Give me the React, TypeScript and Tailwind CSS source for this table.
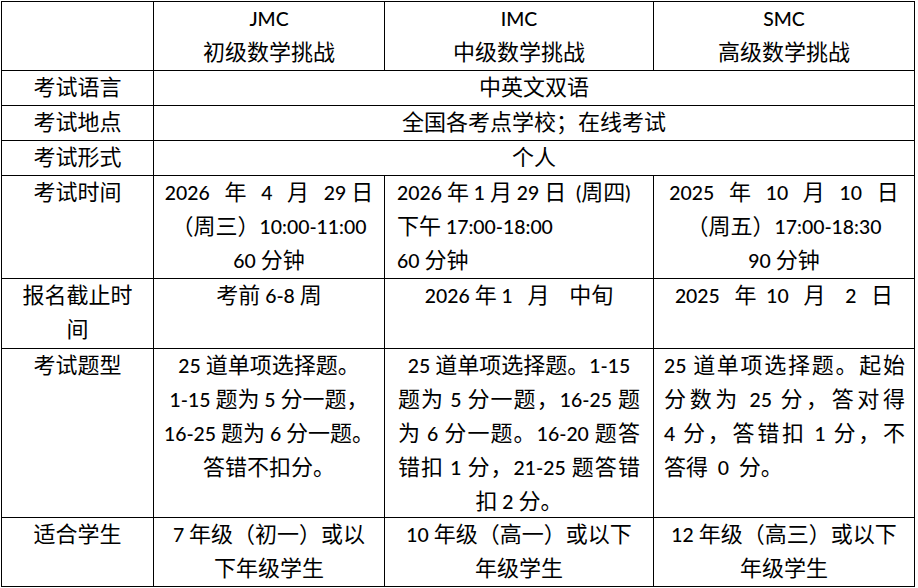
import React from 'react';

function T({ s }: { s: string }) {
  const parts = s.split(/([\x20-\x7E]+)/).filter((p) => p.length > 0);
  return (
    <>
      {parts.map((p, i) =>
        /^[\x20-\x7E]+$/.test(p) ? (
          <span key={i} className="text-[19.4px] leading-none font-medium">
            {p}
          </span>
        ) : (
          <span key={i}>{p}</span>
        )
      )}
    </>
  );
}

function L({ t, a = 'c', pre = false }: { t: string; a?: 'c' | 'l' | 'j'; pre?: boolean }) {
  const al =
    a === 'c'
      ? 'text-center whitespace-nowrap'
      : a === 'l'
      ? 'text-left whitespace-nowrap'
      : 'text-justify [text-align-last:justify]';
  return (
    <div className={`${al} ${pre ? 'whitespace-pre' : ''}`}>
      <T s={t} />
    </div>
  );
}

function C({ children, className = '' }: { children?: React.ReactNode; className?: string }) {
  return (
    <div className={`border-r border-b border-black ${className}`}>
      <div className="-mt-px">{children}</div>
    </div>
  );
}

export default function App() {
  return (
    <div className="min-h-screen bg-white pt-[1px] pl-[1px]">
      <div className="grid w-[914px] grid-cols-[152px_231px_269px_261px] grid-rows-[69px_35px_35px_35px_103px_70px_169px_69px] border-l border-t border-black bg-white text-[22px] leading-[34px] text-black font-['Lato','Noto_Sans_CJK_SC',sans-serif]">
        {/* header */}
        <C />
        <C>
          <L t="JMC" />
          <L t="初级数学挑战" />
        </C>
        <C>
          <L t="IMC" />
          <L t="中级数学挑战" />
        </C>
        <C>
          <L t="SMC" />
          <L t="高级数学挑战" />
        </C>

        {/* 考试语言 */}
        <C>
          <L t="考试语言" />
        </C>
        <C className="col-span-3">
          <L t="中英文双语" />
        </C>

        {/* 考试地点 */}
        <C>
          <L t="考试地点" />
        </C>
        <C className="col-span-3">
          <L t="全国各考点学校；在线考试" />
        </C>

        {/* 考试形式 */}
        <C>
          <L t="考试形式" />
        </C>
        <C className="col-span-3">
          <L t="个人" />
        </C>

        {/* 考试时间 */}
        <C>
          <L t="考试时间" />
        </C>
        <C>
          <L t="2026   年   4   月   29 日" pre />
          <L t="（周三）10:00-11:00" />
          <L t="60 分钟" />
        </C>
        <C className="pl-[12px]">
          <L t="2026 年 1 月 29 日  (周四)" a="l" pre />
          <L t="下午 17:00-18:00" a="l" />
          <L t="60 分钟" a="l" />
        </C>
        <C>
          <L t="2025   年   10   月   10   日" pre />
          <L t="（周五）17:00-18:30" />
          <L t="90 分钟" />
        </C>

        {/* 报名截止时间 */}
        <C>
          <L t="报名截止时" />
          <L t="间" />
        </C>
        <C>
          <L t="考前 6-8 周" />
        </C>
        <C>
          <L t="2026 年 1   月    中旬" pre />
        </C>
        <C>
          <L t="2025   年  10   月    2   日" pre />
        </C>

        {/* 考试题型 */}
        <C>
          <L t="考试题型" />
        </C>
        <C>
          <L t="25 道单项选择题。" />
          <L t="1-15 题为 5 分一题，" />
          <L t="16-25 题为 6 分一题。" />
          <L t="答错不扣分。" />
        </C>
        <C className="px-[13px]">
          <L t="25 道单项选择题。1-15" />
          <L t="题为 5 分一题，16-25 题" a="j" />
          <L t="为 6 分一题。16-20 题答" a="j" />
          <L t="错扣 1 分，21-25 题答错" a="j" />
          <L t="扣 2 分。" />
        </C>
        <C className="pl-[10px] pr-[9px]">
          <L t="25 道单项选择题。起始" a="j" />
          <L t="分数为 25 分，答对得" a="j" />
          <L t="4 分，答错扣 1 分，不" a="j" />
          <L t="答得  0  分。" a="l" pre />
        </C>

        {/* 适合学生 */}
        <C>
          <L t="适合学生" />
        </C>
        <C>
          <L t="7 年级（初一）或以" />
          <L t="下年级学生" />
        </C>
        <C>
          <L t="10 年级（高一）或以下" />
          <L t="年级学生" />
        </C>
        <C>
          <L t="12 年级（高三）或以下" />
          <L t="年级学生" />
        </C>
      </div>
    </div>
  );
}
